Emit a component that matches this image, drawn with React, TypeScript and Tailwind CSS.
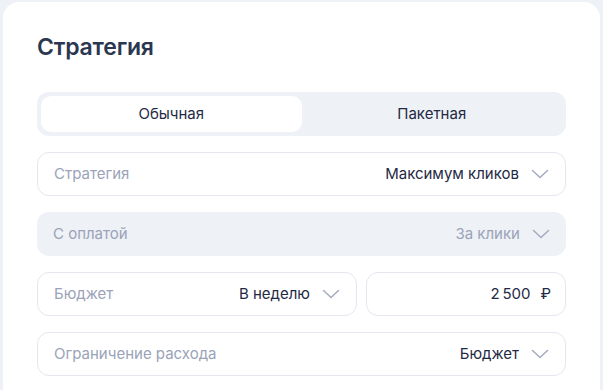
import React from "react";

const Chevron = ({ className = "" }: { className?: string }) => (
  <svg width="18" height="10" viewBox="0 0 18 10" fill="none" className={className}>
    <path d="M1.5 1.5L9 8.5L16.5 1.5" stroke="currentColor" strokeWidth="1.5" strokeLinecap="round" strokeLinejoin="round" />
  </svg>
);

const Field = ({
  label,
  value,
  muted = false,
  className = "",
}: {
  label: string;
  value: string;
  muted?: boolean;
  className?: string;
}) => (
  <div
    className={
      "flex h-[44px] items-center justify-between rounded-[12px] pl-[16px] pr-[16px] " +
      (muted ? "bg-[#eef1f6] " : "border border-[#e4e7ee] bg-white ") +
      className
    }
  >
    <span className="text-[15px] text-[#9aa3b8]">{label}</span>
    <span className="flex items-center gap-[12px]">
      <span className={"text-[15px] " + (muted ? "text-[#9aa3b8]" : "text-[#1f2a44]")}>{value}</span>
      <Chevron className="text-[#a3abbe]" />
    </span>
  </div>
);

export default function App() {
  return (
    <div
      className="h-[390px] w-[603px] overflow-hidden bg-[#eef1f6] pl-[3px] pt-[2px]"
      style={{ fontFamily: "Inter, 'Noto Sans', sans-serif" }}
    >
      <div className="h-[420px] w-[597px] rounded-[16px] bg-white px-[34px] pt-[30px]">
        <h1 className="text-[23px] font-semibold leading-[30px] tracking-[-0.2px] text-[#2b3750]">Стратегия</h1>
        <div className="mt-[30px] flex h-[44px] rounded-[12px] bg-[#eef1f6] p-[4px]">
          <div className="flex flex-1 items-center justify-center rounded-[10px] bg-white text-[15px] text-[#1f2a44]">
            Обычная
          </div>
          <div className="flex flex-1 items-center justify-center text-[15px] text-[#1f2a44]">Пакетная</div>
        </div>
        <div className="mt-[16px] flex flex-col gap-[16px]">
          <Field label="Стратегия" value="Максимум кликов" />
          <Field label="С оплатой" value="За клики" muted />
          <div className="flex gap-[9px]">
            <Field label="Бюджет" value="В неделю" className="w-[320px]" />
            <div className="flex h-[44px] flex-1 items-center justify-end rounded-[12px] border border-[#e4e7ee] bg-white pr-[14px]">
              <span className="text-[15px] text-[#1f2a44]">2{"\u2009"}500</span>
              <span className="ml-[10px] text-[15px] text-[#1f2a44]">₽</span>
            </div>
          </div>
          <Field label="Ограничение расхода" value="Бюджет" />
        </div>
      </div>
    </div>
  );
}
